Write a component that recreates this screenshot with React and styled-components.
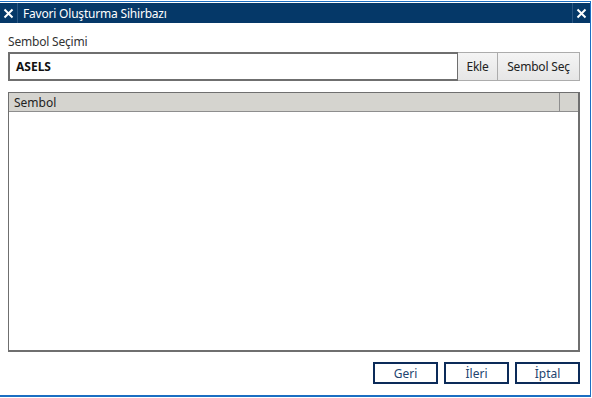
import React from 'react';
import styled, { createGlobalStyle } from 'styled-components';

const GlobalStyle = createGlobalStyle`
  html, body {
    margin: 0;
    padding: 0;
    background: #ffffff;
  }
  body {
    font-family: 'Noto Sans', 'Liberation Sans', sans-serif;
  }
`;

const Window = styled.div`
  box-sizing: border-box;
  width: 591px;
  height: 396px;
  margin-top: 1px;
  border-top: 1px solid #1b6ec2;
  border-right: 1px solid #1b6ec2;
  border-bottom: 2px solid #1b6ec2;
  padding-top: 1px;
  display: flex;
  flex-direction: column;
  background: #ffffff;
`;

const TitleBar = styled.div`
  height: 20px;
  background: #053868;
  display: flex;
  align-items: center;
  color: #ffffff;
`;

const TitleIcon = styled.div`
  width: 17px;
  height: 20px;
  display: flex;
  align-items: center;
  justify-content: center;
  border-${(p) => (p.$side === 'left' ? 'right' : 'left')}: 1px solid #2a5683;
`;

const Title = styled.div`
  flex: 1;
  padding-left: 5px;
  font-size: 12px;
  letter-spacing: -0.2px;
  white-space: nowrap;
`;

const Body = styled.div`
  flex: 1;
  display: flex;
  flex-direction: column;
  padding: 10px 10px 8px 8px;
`;

const Label = styled.div`
  font-size: 12px;
  color: #333333;
  height: 19px;
  letter-spacing: -0.2px;
`;

const InputRow = styled.div`
  display: flex;
  height: 29px;
`;

const SymbolInput = styled.div`
  box-sizing: border-box;
  flex: 1;
  border: 2px solid #6f6f6f;
  border-right-width: 1px;
  display: flex;
  align-items: center;
  padding-left: 6px;
  font-size: 12px;
  font-weight: 700;
  color: #111111;
  background: #ffffff;
`;

const ToolButton = styled.div`
  box-sizing: border-box;
  width: ${(p) => p.$width}px;
  display: flex;
  align-items: center;
  justify-content: center;
  font-size: 12px;
  color: #222222;
  letter-spacing: -0.2px;
  background: linear-gradient(#f4f4f4, #e6e6e6);
  border: 1px solid #acacac;
  border-left: none;
`;

const Grid = styled.div`
  box-sizing: border-box;
  margin-top: 11px;
  height: 260px;
  border: 1px solid #6f6f6f;
  border-width: 1px 2px 2px 1px;
  display: flex;
  flex-direction: column;
`;

const GridHeader = styled.div`
  height: 18px;
  display: flex;
  background: #d5d4cf;
  border-bottom: 1px solid #8e8e8e;
`;

const HeaderCell = styled.div`
  flex: ${(p) => (p.$fill ? 1 : 'none')};
  width: ${(p) => (p.$fill ? 'auto' : '19px')};
  padding-left: 5px;
  font-size: 12px;
  color: #222222;
  display: flex;
  align-items: center;
  border-left: ${(p) => (p.$fill ? 'none' : '1px solid #8e8e8e')};
  box-sizing: border-box;
`;

const Footer = styled.div`
  display: flex;
  justify-content: flex-end;
  gap: 6px;
  margin-top: 10px;
`;

const NavButton = styled.div`
  box-sizing: border-box;
  width: 65px;
  height: 22px;
  border: 2px solid #0c2b59;
  display: flex;
  align-items: center;
  justify-content: center;
  font-size: 12px;
  color: #23446f;
`;

const Close = () => (
  <svg width="11" height="11" viewBox="0 0 11 11">
    <path d="M1.5 1.5 L9.5 9.5 M9.5 1.5 L1.5 9.5" stroke="#ffffff" strokeWidth="2" />
  </svg>
);

export default function App() {
  return (
    <>
      <GlobalStyle />
      <Window>
        <TitleBar>
          <TitleIcon $side="left">
            <Close />
          </TitleIcon>
          <Title>Favori Oluşturma Sihirbazı</Title>
          <TitleIcon $side="right">
            <Close />
          </TitleIcon>
        </TitleBar>
        <Body>
          <Label>Sembol Seçimi</Label>
          <InputRow>
            <SymbolInput>ASELS</SymbolInput>
            <ToolButton $width={40}>Ekle</ToolButton>
            <ToolButton $width={82}>Sembol Seç</ToolButton>
          </InputRow>
          <Grid>
            <GridHeader>
              <HeaderCell $fill>Sembol</HeaderCell>
              <HeaderCell />
            </GridHeader>
          </Grid>
          <Footer>
            <NavButton>Geri</NavButton>
            <NavButton>İleri</NavButton>
            <NavButton>İptal</NavButton>
          </Footer>
        </Body>
      </Window>
    </>
  );
}
